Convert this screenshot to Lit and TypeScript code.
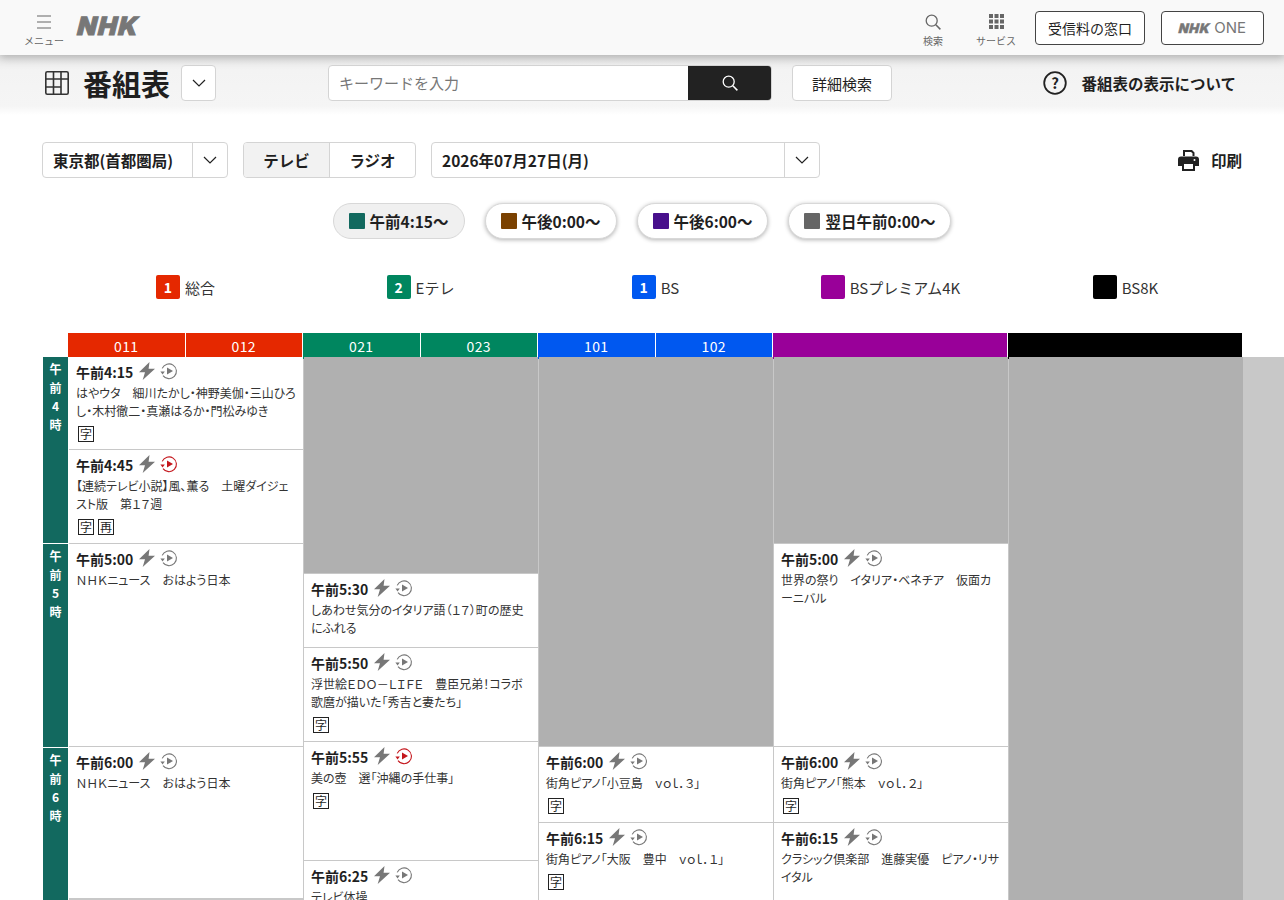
import {LitElement, css, html, nothing} from "lit";
import {customElement} from "lit/decorators.js";

const chevron = html`<svg class="chev" viewBox="0 0 14 8" width="14" height="8"><path d="M1 1l6 6 6-6" fill="none" stroke="#222" stroke-width="1.2"/></svg>`;
const loupe = (c: string, size = 16) => html`<svg viewBox="0 0 16 16" width=${size} height=${size}><circle cx="6.7" cy="6.7" r="5.5" fill="none" stroke=${c} stroke-width="1.3"/><path d="M10.8 10.8l4.6 4.6" stroke=${c} stroke-width="1.5"/></svg>`;
const bolt = html`<svg viewBox="0 0 18 18" width="18" height="18"><path d="M11.5 0L1 10.3h6L4.7 18 17 6.8h-6.4z" fill="#777"/></svg>`;
const replay = (c: string) => html`<svg viewBox="0 0 18 18" width="18" height="18"><path d="M2.2 6.4A7.4 7.4 0 1 1 3 13.6" fill="none" stroke=${c} stroke-width="1.1"/><path d="M0.4 9.4h4.4L2.6 12.4z" fill=${c} transform="rotate(0 2.6 10)"/><path d="M7 5.4l6 3.6-6 3.6z" fill=${c}/></svg>`;

type Prog = {h: number; time?: string; text?: string; tags?: string[]; red?: boolean};

const columns: Prog[][] = [
  [
    {h: 93, time: "午前4:15", text: "はやウタ　細川たかし・神野美伽・三山ひろし・木村徹二・真瀬はるか・門松みゆき", tags: ["字"]},
    {h: 94, time: "午前4:45", text: "【連続テレビ小説】風、薫る　土曜ダイジェスト版　第１７週", tags: ["字", "再"], red: true},
    {h: 203, time: "午前5:00", text: "ＮＨＫニュース　おはよう日本"},
    {h: 152, time: "午前6:00", text: "ＮＨＫニュース　おはよう日本"},
  ],
  [
    {h: 217},
    {h: 74, time: "午前5:30", text: "しあわせ気分のイタリア語（１７）町の歴史にふれる"},
    {h: 94, time: "午前5:50", text: "浮世絵ＥＤＯ－ＬＩＦＥ　豊臣兄弟！コラボ　歌麿が描いた「秀吉と妻たち」", tags: ["字"]},
    {h: 119, time: "午前5:55", text: "美の壺　選「沖縄の手仕事」", tags: ["字"], red: true},
    {h: 60, time: "午前6:25", text: "テレビ体操"},
  ],
  [
    {h: 390},
    {h: 76, time: "午前6:00", text: "街角ピアノ「小豆島　ｖｏｌ．３」", tags: ["字"]},
    {h: 90, time: "午前6:15", text: "街角ピアノ「大阪　豊中　ｖｏｌ．１」", tags: ["字"]},
  ],
  [
    {h: 187},
    {h: 203, time: "午前5:00", text: "世界の祭り　イタリア・ベネチア　仮面カーニバル"},
    {h: 76, time: "午前6:00", text: "街角ピアノ「熊本　ｖｏｌ．２」", tags: ["字"]},
    {h: 90, time: "午前6:15", text: "クラシック倶楽部　進藤実優　ピアノ・リサイタル"},
  ],
  [{h: 560}],
];

const heads = [
  {color: "#e52800", codes: ["011", "012"]},
  {color: "#00865f", codes: ["021", "023"]},
  {color: "#0058f0", codes: ["101", "102"]},
  {color: "#990099", codes: []},
  {color: "#000", codes: []},
];

const channels = [
  {color: "#e52800", num: "1", name: "総合"},
  {color: "#00865f", num: "2", name: "Eテレ"},
  {color: "#0058f0", num: "1", name: "BS"},
  {color: "#990099", num: "", name: "BSプレミアム4K"},
  {color: "#000", num: "", name: "BS8K"},
];

const pills = [
  {color: "#12695f", label: "午前4:15～", on: true},
  {color: "#7a4100", label: "午後0:00～"},
  {color: "#48108c", label: "午後6:00～"},
  {color: "#666", label: "翌日午前0:00～"},
];

const hours = [
  {h: 186, label: "午前4時"},
  {h: 203, label: "午前5時"},
  {h: 171, label: "午前6時"},
];

@customElement("app-root")
export class AppRoot extends LitElement {
  static override styles = css`
    :host {
      display: block;
      height: 900px;
      overflow: hidden;
      background: #fff;
      color: #1f1f1f;
      font-family: "Noto Sans CJK JP", "Noto Sans", sans-serif;
    }
    svg { display: block; flex: none; }

    .top {
      position: relative;
      z-index: 2;
      height: 55px;
      box-sizing: border-box;
      display: flex;
      align-items: center;
      padding: 0 20px 0 24px;
      background: #f9f9f9;
      box-shadow: 0 3px 8px rgba(0, 0, 0, .22);
    }
    .tool {
      display: flex;
      flex-direction: column;
      align-items: center;
      color: #666;
      font-size: 10px;
      line-height: 12px;
      gap: 5px;
      padding-top: 5px;
    }
    .tool .ico { height: 17px; display: flex; align-items: center; }
    .logo {
      margin-left: 14px;
      margin-bottom: 3px;
      font-family: "Inter", sans-serif;
      font-weight: 900;
      font-size: 25px;
      line-height: 30px;
      letter-spacing: 1.5px;
      color: #777;
      -webkit-text-stroke: 1px #777;
      transform: skewX(-14deg);
    }
    .spacer { flex: 1; }
    .top-btn {
      box-sizing: border-box;
      height: 34px;
      display: flex;
      align-items: center;
      justify-content: center;
      border: 1px solid #444;
      border-radius: 4px;
      background: #fff;
      font-size: 14px;
    }
    .top-btn.fee { width: 110px; margin-left: 19px; }
    .top-btn.one { width: 103px; margin-left: 16px; color: #777; gap: 4px; font-size: 15px; }
    .one b {
      font-family: "Inter", sans-serif;
      font-weight: 900;
      font-size: 13px;
      letter-spacing: .6px;
      -webkit-text-stroke: .4px #777;
      transform: skewX(-14deg);
    }
    .one span { font-family: "Inter", sans-serif; font-size: 15px; }

    .sub {
      height: 60px;
      box-sizing: border-box;
      display: flex;
      align-items: center;
      padding: 0 48px 4px 45px;
      background: linear-gradient(#e6e6e6, #f3f3f3 25%, #f5f5f5 85%, #fff);
    }
    .page-title {
      margin: 0 0 0 14px;
      font-size: 29px;
      line-height: 36px;
      font-weight: 700;
    }
    .drop {
      box-sizing: border-box;
      width: 35px;
      height: 36px;
      margin-left: 11px;
      display: flex;
      align-items: center;
      justify-content: center;
      background: #fff;
      border: 1px solid #d4d4d4;
      border-radius: 4px;
    }
    .search {
      box-sizing: border-box;
      display: flex;
      width: 444px;
      height: 36px;
      margin-left: 112px;
      border: 1px solid #d4d4d4;
      border-radius: 4px;
      background: #fff;
      overflow: hidden;
    }
    .search .ph { flex: 1; padding-left: 10px; font-size: 15px; line-height: 34px; color: #777; }
    .search .go { width: 83px; background: #222; display: flex; align-items: center; justify-content: center; }
    .detail {
      box-sizing: border-box;
      width: 100px;
      height: 36px;
      margin-left: 20px;
      display: flex;
      align-items: center;
      justify-content: center;
      background: #fff;
      border: 1px solid #d4d4d4;
      border-radius: 4px;
      font-size: 15px;
    }
    .about { display: flex; align-items: center; gap: 14px; font-size: 15.5px; font-weight: 700; }

    .controls {
      display: flex;
      align-items: center;
      margin-top: 27px;
      padding: 0 42px;
      height: 36px;
    }
    .box {
      box-sizing: border-box;
      height: 36px;
      display: flex;
      align-items: center;
      border: 1px solid #d4d4d4;
      border-radius: 4px;
      background: #fff;
      font-size: 15.5px;
      font-weight: 700;
      overflow: hidden;
    }
    .box .val { flex: 1; padding-left: 10px; white-space: nowrap; }
    .box .arrow {
      width: 34px;
      height: 100%;
      border-left: 1px solid #d4d4d4;
      display: flex;
      align-items: center;
      justify-content: center;
    }
    .area { width: 186px; }
    .tabs { width: 173px; margin-left: 15px; }
    .tabs div { flex: 1; height: 100%; display: flex; align-items: center; justify-content: center; }
    .tabs .on { background: #f2f2f2; border-right: 1px solid #d4d4d4; }
    .date { width: 389px; margin-left: 15px; }
    .print { margin-left: auto; display: flex; align-items: center; gap: 12px; font-size: 15.5px; font-weight: 700; }

    .pills {
      display: flex;
      justify-content: center;
      gap: 20px;
      margin-top: 25px;
    }
    .pill {
      box-sizing: border-box;
      height: 36px;
      padding: 0 15px;
      display: flex;
      align-items: center;
      gap: 5px;
      border: 1px solid #d8d8d8;
      border-radius: 18px;
      background: #fff;
      box-shadow: 0 1px 4px rgba(0, 0, 0, .3);
      font-size: 15.5px;
      font-weight: 700;
    }
    .pill.on { background: #f0f0f0; box-shadow: none; }
    .pill i { width: 16px; height: 16px; border-radius: 1px; }

    .chans {
      display: grid;
      grid-template-columns: repeat(5, 235px);
      margin: 36px 0 0 68px;
      height: 24px;
    }
    .chan {
      display: flex;
      align-items: center;
      justify-content: center;
      gap: 5px;
      font-size: 15px;
      color: #333;
    }
    .chan i {
      width: 24px;
      height: 24px;
      border-radius: 2px;
      display: flex;
      align-items: center;
      justify-content: center;
      color: #fff;
      font-style: normal;
      font-weight: 700;
      font-size: 14px;
    }

    .heads {
      display: grid;
      grid-template-columns: repeat(5, 234px);
      column-gap: 1px;
      margin: 34px 0 0 68px;
      height: 24px;
    }
    .head { display: flex; gap: 1px; }
    .head span {
      flex: 1;
      color: #fff;
      font-size: 14px;
      line-height: 26px;
      text-align: center;
      letter-spacing: .4px;
    }

    .table {
      display: grid;
      grid-template-columns: 25px repeat(5, 234px);
      column-gap: 1px;
      margin-left: 43px;
      background: #c8c8c8;
    }
    .hours { display: flex; flex-direction: column; gap: 1px; background: #fff; margin-right: -1px; padding-right: 1px; }
    .hour {
      background: #12695f;
      color: #fff;
      font-size: 12px;
      font-weight: 700;
      line-height: 18.5px;
      text-align: center;
      padding-top: 3px;
      box-sizing: border-box;
    }
    .col { display: flex; flex-direction: column; }
    .prog {
      box-sizing: border-box;
      flex: none;
      overflow: hidden;
      background: #fff;
      border-bottom: 1px solid #c8c8c8;
      padding: 4px 7px 0;
    }
    .prog.empty { background: #b0b0b0; }
    .when { display: flex; align-items: center; height: 22px; gap: 5px; font-size: 14px; font-weight: 700; }
    .icons { display: flex; gap: 4px; margin-top: -2px; }
    .desc {
      font-size: 12px;
      line-height: 18px;
      color: #333;
      font-feature-settings: "palt";
      margin-top: 1px;
    }
    .tags { display: flex; gap: 4px; margin: 6px 0 0 2px; }
    .tags span {
      box-sizing: border-box;
      width: 16px;
      height: 16px;
      border: 1px solid #222;
      font-size: 12px;
      line-height: 13px;
      text-align: center;
    }
  `;

  private renderProg(p: Prog) {
    if (!p.time) return html`<div class="prog empty" style="height:${p.h}px"></div>`;
    return html`
      <div class="prog" style="height:${p.h}px">
        <div class="when">
          ${p.time}
          <div class="icons">${bolt}${replay(p.red ? "#c4161c" : "#777")}</div>
        </div>
        <div class="desc">${p.text}</div>
        ${p.tags ? html`<div class="tags">${p.tags.map(t => html`<span>${t}</span>`)}</div>` : nothing}
      </div>
    `;
  }

  override render() {
    return html`
      <header class="top">
        <div class="tool">
          <div class="ico"><svg viewBox="0 0 14 14" width="14" height="14"><path d="M0 1h14M0 7h14M0 13h14" stroke="#666" stroke-width="1.2"/></svg></div>
          メニュー
        </div>
        <div class="logo">NHK</div>
        <div class="spacer"></div>
        <div class="tool">
          <div class="ico">${loupe("#666")}</div>
          検索
        </div>
        <div class="tool" style="margin-left:33px">
          <div class="ico"><svg viewBox="0 0 15 15" width="15" height="15" fill="#666">${[1.5, 6.5, 12.5].flatMap(y => [1.5, 7.5, 13.5].map(x => html``)) && nothing}<path d="M0 0h4v4H0zM5.5 0h4v4h-4zM11 0h4v4h-4zM0 5.5h4v4H0zM5.5 5.5h4v4h-4zM11 5.5h4v4h-4zM0 11h4v4H0zM5.5 11h4v4h-4zM11 11h4v4h-4z"/></svg></div>
          サービス
        </div>
        <div class="top-btn fee">受信料の窓口</div>
        <div class="top-btn one"><b>NHK</b><span>ONE</span></div>
      </header>

      <section class="sub">
        <svg viewBox="0 0 24 24" width="24" height="24" fill="none" stroke="#333" stroke-width="1.6"><rect x=".8" y=".8" width="22.4" height="22.4" rx="1.5"/><path d="M8.5 1v22M16 1v22M1 8h22M1 16h15"/></svg>
        <h1 class="page-title">番組表</h1>
        <div class="drop">${chevron}</div>
        <div class="search">
          <div class="ph">キーワードを入力</div>
          <div class="go">${loupe("#fff")}</div>
        </div>
        <div class="detail">詳細検索</div>
        <div class="spacer"></div>
        <div class="about">
          <svg viewBox="0 0 24 24" width="24" height="24"><circle cx="12" cy="12" r="10.8" fill="none" stroke="#222" stroke-width="1.8"/><text x="12" y="17.5" text-anchor="middle" font-size="15" font-weight="700" fill="#222">?</text></svg>
          番組表の表示について
        </div>
      </section>

      <div class="controls">
        <div class="box area"><div class="val">東京都(首都圏局)</div><div class="arrow">${chevron}</div></div>
        <div class="box tabs"><div class="on">テレビ</div><div>ラジオ</div></div>
        <div class="box date"><div class="val">2026年07月27日(月)</div><div class="arrow">${chevron}</div></div>
        <div class="print">
          <svg viewBox="0 0 21 21" width="21" height="21" fill="#222"><path d="M5 0h9l2.5 2.5V6h-2V3.2L13 2H7v4H5z"/><path d="M3 6.5h15a3 3 0 0 1 3 3V16h-4v5H4v-5H0V9.500a3 3 0 0 1 3-3zM6 14v5h9v-5zM16.500 9a1 1 0 1 0 0 2 1 1 0 0 0 0-2z" fill-rule="evenodd"/></svg>
          印刷
        </div>
      </div>

      <div class="pills">
        ${pills.map(p => html`<div class="pill ${p.on ? "on" : ""}"><i style="background:${p.color}"></i>${p.label}</div>`)}
      </div>

      <div class="chans">
        ${channels.map(c => html`<div class="chan"><i style="background:${c.color}">${c.num}</i>${c.name}</div>`)}
      </div>

      <div class="heads">
        ${heads.map(h => html`
          <div class="head">
            ${h.codes.length
              ? h.codes.map(code => html`<span style="background:${h.color}">${code}</span>`)
              : html`<span style="background:${h.color}"></span>`}
          </div>
        `)}
      </div>

      <div class="table">
        <div class="hours">
          ${hours.map(h => html`<div class="hour" style="height:${h.h}px">${[...h.label].map(c => html`<div>${c}</div>`)}</div>`)}
        </div>
        ${columns.map(col => html`<div class="col">${col.map(p => this.renderProg(p))}</div>`)}
      </div>
    `;
  }
}
